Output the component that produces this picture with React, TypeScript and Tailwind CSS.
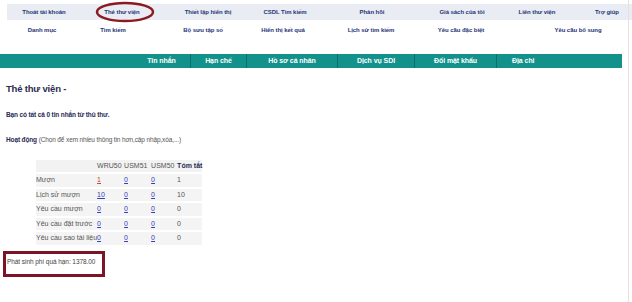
const topRow = [
  { label: "Thoát tài khoản", w: "w-[74px]" },
  { label: "Thẻ thư viện", w: "w-[82px]" },
  { label: "Thiết lập hiển thị", w: "w-[90px]" },
  { label: "CSDL Tìm kiếm", w: "w-[64px]" },
  { label: "Phản hồi", w: "w-[110px]" },
  { label: "Giá sách của tôi", w: "w-[70px]" },
  { label: "Liên thư viện", w: "w-[80px]" },
  { label: "Trợ giúp", w: "w-[50px] pl-[10px]" },
];

const subRow = [
  { label: "Danh mục", w: "w-[84px]" },
  { label: "Tìm kiếm", w: "w-[58px]" },
  { label: "Bộ sưu tập số", w: "w-[122px]" },
  { label: "Hiển thị kết quả", w: "w-[38px]" },
  { label: "Lịch sử tìm kiếm", w: "w-[138px]" },
  { label: "Yêu cầu đặc biệt", w: "w-[42px]" },
  { label: "Yêu cầu bổ sung", w: "w-[150px] pl-[42px]" },
];

const tabs = [
  { label: "Tin nhắn", w: "w-[58px]" },
  { label: "Hạn chế", w: "w-[56px]" },
  { label: "Hồ sơ cá nhân", w: "w-[91px]" },
  { label: "Dịch vụ SDI", w: "w-[77px]" },
  { label: "Đổi mật khẩu", w: "w-[82px]" },
];

const rows = [
  { label: "Mượn", wru: "1", visited: true, total: "1" },
  { label: "Lịch sử mượn", wru: "10", total: "10" },
  { label: "Yêu cầu mượn", wru: "0", total: "0" },
  { label: "Yêu cầu đặt trước", wru: "0", total: "0" },
  { label: "Yêu cầu sao tài liệu", wru: "0", total: "0" },
];

export default function App() {
  return (
    <div className="relative w-[632px] h-[302px] overflow-hidden bg-white font-['Liberation_Sans',Arial,sans-serif]">
      {/* top menu */}
      <div className="pt-[4px]">
        <div className="ml-[7px] h-[16px] flex items-center bg-[#e9edf3] text-[6px] font-bold tracking-[-0.01em] text-[#1f3577]">
          {topRow.map((t) => (
            <div key={t.label} className={`${t.w} shrink-0 flex justify-center whitespace-nowrap`}>
              {t.label}
            </div>
          ))}
        </div>
        <div className="h-[20px] flex items-center text-[6px] font-bold tracking-[-0.01em] text-[#1f3577]">
          {subRow.map((t) => (
            <div key={t.label} className={`${t.w} shrink-0 flex justify-center whitespace-nowrap`}>
              {t.label}
            </div>
          ))}
        </div>
      </div>

      {/* teal tab bar */}
      <div className="mt-[14px] w-[622px] h-[14px] flex bg-[#12928a] text-[7px] font-bold tracking-[-0.01em] text-white">
        <div className="w-[133px] shrink-0" />
        {tabs.map((t) => (
          <div
            key={t.label}
            className={`${t.w} shrink-0 flex items-center justify-center whitespace-nowrap border-r border-[#0b6f69]`}
          >
            {t.label}
          </div>
        ))}
        <div className="flex items-center pl-[15px] whitespace-nowrap">Địa chỉ</div>
      </div>

      {/* content */}
      <div className="pl-[6px]">
        <h1 className="mt-[15px] text-[9.5px] leading-[12px] font-bold tracking-[-0.02em] text-[#2c2c4e]">
          Thẻ thư viện -
        </h1>
        <p className="mt-[16px] text-[6.5px] leading-[8px] font-bold tracking-[-0.02em] text-[#1f2a55]">
          Bạn có tất cả 0 tin nhắn từ thủ thư.
        </p>
        <p className="mt-[17px] text-[6.5px] leading-[8px] tracking-[-0.02em] text-[#555]">
          <span className="font-bold text-[#1f2a55]">Hoạt động</span> (Chọn để xem nhiều thông tin hơn,cập nhập,xóa,...)
        </p>

        <table className="mt-[14px] ml-[30px] border-separate border-spacing-x-0 border-spacing-y-[2px] text-[7px] leading-[8px] text-[#555] whitespace-nowrap">
          <thead>
            <tr className="bg-[#f2f2f2]">
              <th className="w-[58px] h-[12px] p-0" />
              <th className="w-[27px] p-0 text-left font-normal">WRU50</th>
              <th className="w-[27px] p-0 text-left font-normal">USM51</th>
              <th className="w-[26px] p-0 text-left font-normal">USM50</th>
              <th className="w-[24px] p-0 text-left font-bold text-[#1f2a55]">Tóm tắt</th>
            </tr>
          </thead>
          <tbody>
            {rows.map((r) => (
              <tr key={r.label} className="bg-[#f4f4f4]">
                <td className="h-[12.5px] p-0">{r.label}</td>
                <td className="p-0">
                  <span className={`underline ${r.visited ? "text-[#c2452d]" : "text-[#3540b8]"}`}>{r.wru}</span>
                </td>
                <td className="p-0">
                  <span className="underline text-[#3540b8]">0</span>
                </td>
                <td className="p-0">
                  <span className="underline text-[#3540b8]">0</span>
                </td>
                <td className="p-0">{r.total}</td>
              </tr>
            ))}
          </tbody>
        </table>
      </div>

      {/* overdue fee box */}
      <div className="mt-[4px] ml-[3px] w-[102px] h-[26px] border-[3px] border-[#7b1526] pl-[1px] pt-[4px] text-[6.5px] leading-[8px] tracking-[-0.01em] text-[#444] whitespace-nowrap">
        Phát sinh phí quá hạn: 1378.00
      </div>

      {/* hand-drawn highlight ring */}
      <svg className="absolute left-[95px] top-[1px]" width="60" height="22" viewBox="0 0 60 22">
        <ellipse cx="30" cy="11" rx="28" ry="9" fill="none" stroke="#8b1a22" strokeWidth="2.5" />
      </svg>

      <div className="absolute right-[3px] top-0 h-full w-px bg-[#e2e2e2]" />
    </div>
  );
}
